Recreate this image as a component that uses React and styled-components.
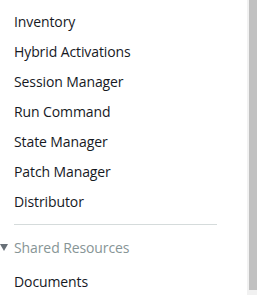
import React from 'react'
import styled, { createGlobalStyle } from 'styled-components'

const GlobalStyle = createGlobalStyle`
    html, body {
        margin: 0;
        padding: 0;
        background: #ffffff;
    }
    body {
        font-family: "Open Sans", "Liberation Sans", sans-serif;
    }
`

const Frame = styled.div`
    display: flex;
    width: 257px;
    height: 295px;
    overflow: hidden;
`

const Nav = styled.nav`
    flex: 1;
    padding-top: 6px;
`

const NavItem = styled.div`
    height: 30px;
    display: flex;
    align-items: center;
    padding-left: 14px;
    margin-top: ${p => (p.gap ? '4px' : '0')};
    font-size: 14px;
    letter-spacing: -0.1px;
    color: ${p => (p.muted ? '#879596' : '#16191f')};
    position: relative;
`

const Divider = styled.div`
    height: 1px;
    margin: 8px 30px 7px 14px;
    background: #d5dbdb;
`

const Caret = styled.span`
    position: absolute;
    left: 0;
    top: 50%;
    margin-top: -3px;
    width: 0;
    height: 0;
    border-left: 4px solid transparent;
    border-right: 4px solid transparent;
    border-top: 7px solid #687078;
`

const Scrollbar = styled.div`
    width: 10px;
    background: #f1f1f1;
    display: flex;
    justify-content: flex-end;
    padding-bottom: 5px;
    box-sizing: border-box;
`

const Thumb = styled.div`
    width: 8px;
    height: 100%;
    background: #c1c1c1;
`

const items = [
    'Inventory',
    'Hybrid Activations',
    'Session Manager',
    'Run Command',
    'State Manager',
    'Patch Manager',
    'Distributor',
]

export default function App() {
    return (
        <Frame>
            <GlobalStyle />
            <Nav>
                {items.map(label => (
                    <NavItem key={label}>{label}</NavItem>
                ))}
                <Divider />
                <NavItem muted>
                    <Caret />
                    Shared Resources
                </NavItem>
                <NavItem gap>Documents</NavItem>
            </Nav>
            <Scrollbar>
                <Thumb />
            </Scrollbar>
        </Frame>
    )
}
